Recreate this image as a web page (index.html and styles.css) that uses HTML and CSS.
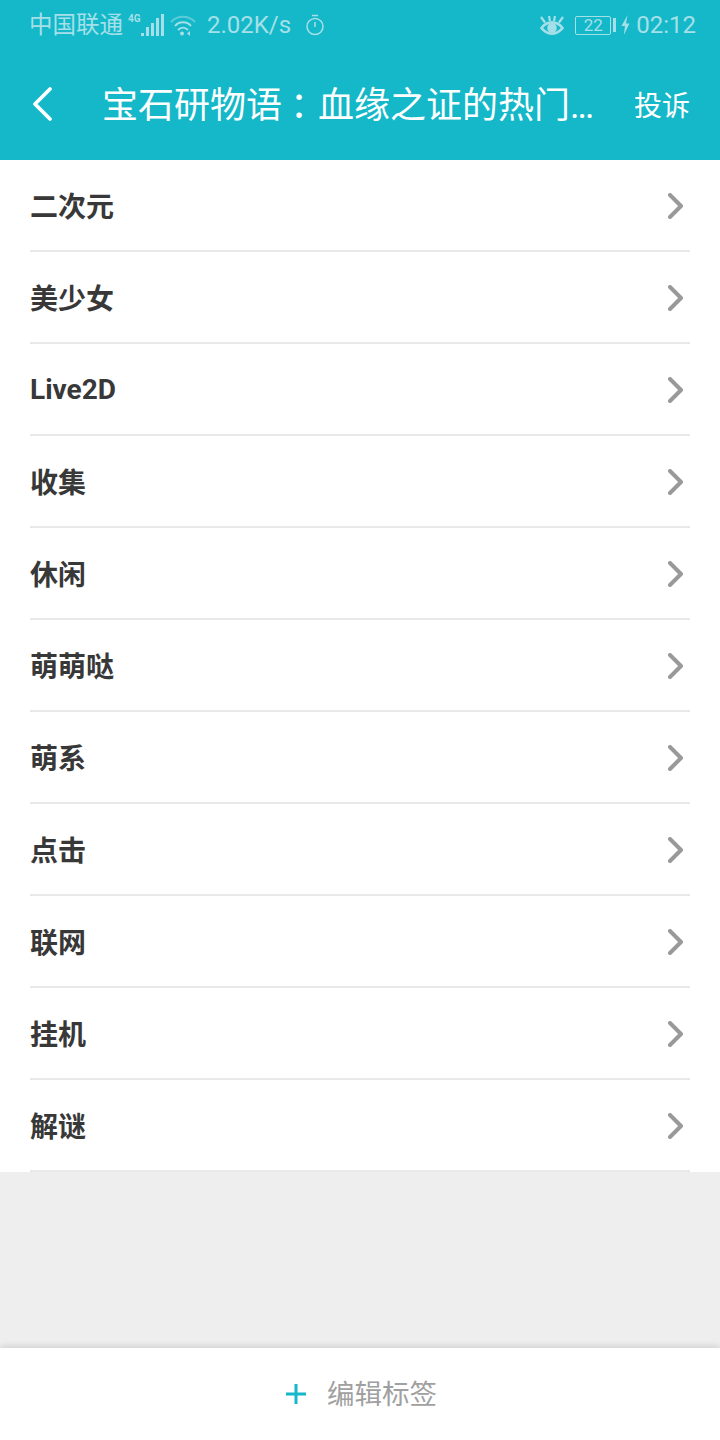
FILE: index.html
```html
<!DOCTYPE html>
<html lang="zh-CN">
<head>
    <meta charset="UTF-8">
    <meta name="viewport" content="width=device-width, initial-scale=1.0">
    <title>标签</title>
    <link rel="stylesheet" href="styles.css">
</head>
<body>
    <div class="page">
        <div class="header">
            <div class="status-bar">
                <div class="status-left">
                    <span class="carrier">中国联通</span>
                    <span class="net-type">4G</span>
                    <svg class="signal" width="24" height="24" viewBox="0 0 24 24">
                        <rect x="1" y="20" width="3" height="3"/>
                        <rect x="6" y="14" width="3" height="9"/>
                        <rect x="11" y="10" width="3" height="13"/>
                        <rect x="16" y="5" width="3" height="18"/>
                        <rect x="21" y="1" width="3" height="22"/>
                    </svg>
                    <svg class="wifi" width="26" height="24" viewBox="0 0 26 24" fill="none" stroke="#a5e0e8" stroke-width="2">
                        <path d="M1 9 C7 2 19 2 25 9" opacity="0.5"/>
                        <path d="M5 13 C9 8 17 8 21 13"/>
                        <path d="M8 17 C11 14 15 14 18 17"/>
                        <circle cx="12" cy="20.5" r="2" fill="#a5e0e8" stroke="none"/>
                        <path d="M20 18 L17 20.5 L20 23 Z" fill="#a5e0e8" stroke="none"/>
                    </svg>
                    <span class="speed">2.02K/s</span>
                    <svg class="timer" width="22" height="24" viewBox="0 0 22 24" fill="none" stroke="#a5e0e8" stroke-width="1.5">
                        <circle cx="11" cy="13.5" r="8"/>
                        <path d="M8 2.5 H14 M11 9 V14"/>
                    </svg>
                </div>
                <div class="status-right">
                    <svg class="eye" width="26" height="24" viewBox="0 0 26 24">
                        <path d="M2.5 15 C8 7.5 18 7.5 23.5 15 C18 22.5 8 22.5 2.5 15 Z" fill="none" stroke="#a5e0e8" stroke-width="2.6"/>
                        <circle cx="13" cy="15" r="4.8" fill="#a5e0e8"/>
                        <path d="M2 4 L6 9.5 M24 4 L20 9.5 M10 3 L11 8 M16 3 L15 8" stroke="#a5e0e8" stroke-width="2.2"/>
                    </svg>
                    <div class="battery"><span class="battery-level">22</span></div>
                    <span class="battery-tip"></span>
                    <svg class="bolt" width="9" height="20" viewBox="0 0 9 20">
                        <path d="M6.5 0 L0.5 11 H4 L2.8 20 L8.5 8.5 H5 Z" fill="#a5e0e8"/>
                    </svg>
                    <span class="clock">02:12</span>
                </div>
            </div>
            <div class="nav-bar">
                <svg class="back" width="24" height="36" viewBox="0 0 24 36" fill="none" stroke="#fff" stroke-width="3.8" stroke-linecap="round" stroke-linejoin="round">
                    <path d="M20 3 L5 18 L20 33"/>
                </svg>
                <div class="nav-title">宝石研物语<span class="title-colon">：</span>血缘之证的热门<span class="title-dots">...</span></div>
                <div class="nav-action">投诉</div>
            </div>
        </div>

        <ul class="tag-list">
            <li class="tag-row"><span>二次元</span><svg class="chevron" width="18" height="26" viewBox="0 0 18 26"><path d="M3 2 L14 13 L3 24"/></svg></li>
            <li class="tag-row"><span>美少女</span><svg class="chevron" width="18" height="26" viewBox="0 0 18 26"><path d="M3 2 L14 13 L3 24"/></svg></li>
            <li class="tag-row"><span>Live2D</span><svg class="chevron" width="18" height="26" viewBox="0 0 18 26"><path d="M3 2 L14 13 L3 24"/></svg></li>
            <li class="tag-row"><span>收集</span><svg class="chevron" width="18" height="26" viewBox="0 0 18 26"><path d="M3 2 L14 13 L3 24"/></svg></li>
            <li class="tag-row"><span>休闲</span><svg class="chevron" width="18" height="26" viewBox="0 0 18 26"><path d="M3 2 L14 13 L3 24"/></svg></li>
            <li class="tag-row"><span>萌萌哒</span><svg class="chevron" width="18" height="26" viewBox="0 0 18 26"><path d="M3 2 L14 13 L3 24"/></svg></li>
            <li class="tag-row"><span>萌系</span><svg class="chevron" width="18" height="26" viewBox="0 0 18 26"><path d="M3 2 L14 13 L3 24"/></svg></li>
            <li class="tag-row"><span>点击</span><svg class="chevron" width="18" height="26" viewBox="0 0 18 26"><path d="M3 2 L14 13 L3 24"/></svg></li>
            <li class="tag-row"><span>联网</span><svg class="chevron" width="18" height="26" viewBox="0 0 18 26"><path d="M3 2 L14 13 L3 24"/></svg></li>
            <li class="tag-row"><span>挂机</span><svg class="chevron" width="18" height="26" viewBox="0 0 18 26"><path d="M3 2 L14 13 L3 24"/></svg></li>
            <li class="tag-row"><span>解谜</span><svg class="chevron" width="18" height="26" viewBox="0 0 18 26"><path d="M3 2 L14 13 L3 24"/></svg></li>
        </ul>

        <div class="spacer"></div>

        <div class="footer">
            <svg class="plus" width="22" height="22" viewBox="0 0 22 22">
                <path d="M11 1 V21 M1 11 H21" stroke="#14b8c8" stroke-width="3"/>
            </svg>
            <span class="footer-label">编辑标签</span>
        </div>
    </div>
</body>
</html>
```

FILE: styles.css
```css
html, body {
    margin: 0;
    padding: 0;
}
body {
    font-family: "Roboto", "Noto Sans CJK SC", sans-serif;
    background-color: #ffffff;
}
.page {
    width: 720px;
    height: 1440px;
    display: flex;
    flex-direction: column;
    overflow: hidden;
}
.header {
    height: 160px;
    background-color: #14b8c8;
    flex-shrink: 0;
}
.status-bar {
    height: 50px;
    padding: 0 24px 0 29px;
    display: flex;
    justify-content: space-between;
    align-items: center;
    color: #a5e0e8;
}
.status-left,
.status-right {
    display: flex;
    align-items: center;
}
.carrier {
    font-size: 23.5px;
    margin-bottom: 4px;
}
.net-type {
    width: 12px;
    font-size: 10px;
    font-weight: bold;
    margin: 0 0 14px 5px;
}
.signal {
    fill: #a5e0e8;
}
.wifi {
    margin-left: 6px;
}
.speed {
    font-size: 24px;
    margin-left: 11px;
}
.timer {
    margin-left: 13px;
}
.eye {
    margin-right: 10px;
}
.battery {
    width: 36px;
    height: 19px;
    box-sizing: border-box;
    border: 1px solid #a5e0e8;
    border-radius: 2px;
    display: flex;
    align-items: center;
    justify-content: center;
}
.battery-level {
    font-size: 17px;
}
.battery-tip {
    width: 3px;
    height: 14px;
    margin: 0 5px 0 2px;
    background-color: #a5e0e8;
}
.clock {
    font-size: 24px;
    margin-left: 6px;
}
.nav-bar {
    height: 110px;
    padding: 0 30px;
    display: flex;
    align-items: center;
    box-sizing: border-box;
    color: #ffffff;
}
.back {
    flex-shrink: 0;
    margin-bottom: 2px;
}
.nav-title {
    font-size: 36px;
    margin: 0 0 6px 48px;
    flex: 1;
    white-space: nowrap;
}
.title-colon {
    font-feature-settings: "halt" 1;
    margin: 0 10px 0 8px;
}
.title-dots {
    letter-spacing: -2px;
}
.nav-action {
    font-size: 28px;
    margin-bottom: 2px;
}
.tag-list {
    list-style: none;
    margin: 0;
    padding: 0 30px;
    background-color: #ffffff;
    flex-shrink: 0;
}
.tag-row {
    height: 92px;
    box-sizing: border-box;
    border-bottom: 2px solid #e9e9e9;
    display: flex;
    justify-content: space-between;
    align-items: center;
    font-size: 28px;
    font-weight: bold;
    color: #383838;
}
.chevron {
    fill: none;
    stroke: #999999;
    stroke-width: 4;
    stroke-linecap: round;
    stroke-linejoin: round;
    margin: 2px 5px 0 0;
}
.spacer {
    flex: 1;
    background-color: #eeeeee;
}
.footer {
    height: 92px;
    flex-shrink: 0;
    padding-left: 2px;
    box-sizing: border-box;
    background-color: #ffffff;
    box-shadow: 0 -2px 6px rgba(0, 0, 0, 0.12);
    display: flex;
    justify-content: center;
    align-items: center;
    gap: 20px;
}
.footer-label {
    font-size: 27.5px;
    color: #a0a0a0;
    margin-bottom: 4px;
}
```
